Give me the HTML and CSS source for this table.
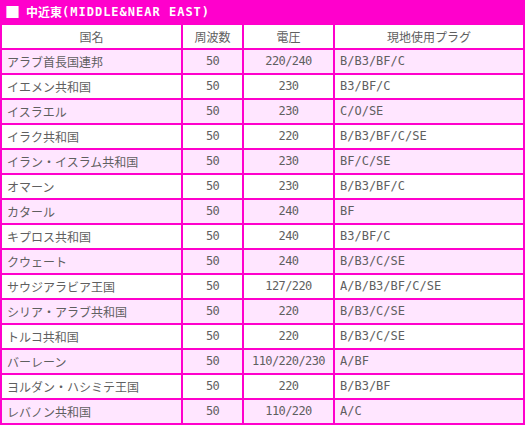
FILE: index.html
```html
<!DOCTYPE html>
<html lang="ja">
<head>
<meta charset="utf-8">
<title>中近東</title>
<link rel="stylesheet" href="styles.css">
</head>
<body>
<div class="page">
  <div class="title"><span class="mark">■</span><span class="title-jp">中近東</span><span class="title-en">(MIDDLE&amp;NEAR EAST)</span></div>
  <table class="plugs">
    <colgroup>
      <col class="c-name"><col class="c-hz"><col class="c-volt"><col class="c-plug">
    </colgroup>
    <tr class="head"><td>国名</td><td>周波数</td><td>電圧</td><td>現地使用プラグ</td></tr>
    <tr class="pink"><td class="l">アラブ首長国連邦</td><td class="n">50</td><td class="n">220/240</td><td class="l p">B/B3/BF/C</td></tr>
    <tr><td class="l">イエメン共和国</td><td class="n">50</td><td class="n">230</td><td class="l p">B3/BF/C</td></tr>
    <tr class="pink"><td class="l">イスラエル</td><td class="n">50</td><td class="n">230</td><td class="l p">C/O/SE</td></tr>
    <tr><td class="l">イラク共和国</td><td class="n">50</td><td class="n">220</td><td class="l p">B/B3/BF/C/SE</td></tr>
    <tr class="pink"><td class="l">イラン・イスラム共和国</td><td class="n">50</td><td class="n">230</td><td class="l p">BF/C/SE</td></tr>
    <tr><td class="l">オマーン</td><td class="n">50</td><td class="n">230</td><td class="l p">B/B3/BF/C</td></tr>
    <tr class="pink"><td class="l">カタール</td><td class="n">50</td><td class="n">240</td><td class="l p">BF</td></tr>
    <tr><td class="l">キプロス共和国</td><td class="n">50</td><td class="n">240</td><td class="l p">B3/BF/C</td></tr>
    <tr class="pink"><td class="l">クウェート</td><td class="n">50</td><td class="n">240</td><td class="l p">B/B3/C/SE</td></tr>
    <tr><td class="l">サウジアラビア王国</td><td class="n">50</td><td class="n">127/220</td><td class="l p">A/B/B3/BF/C/SE</td></tr>
    <tr class="pink"><td class="l">シリア・アラブ共和国</td><td class="n">50</td><td class="n">220</td><td class="l p">B/B3/C/SE</td></tr>
    <tr><td class="l">トルコ共和国</td><td class="n">50</td><td class="n">220</td><td class="l p">B/B3/C/SE</td></tr>
    <tr class="pink"><td class="l">バーレーン</td><td class="n">50</td><td class="n">110/220/230</td><td class="l p">A/BF</td></tr>
    <tr><td class="l">ヨルダン・ハシミテ王国</td><td class="n">50</td><td class="n">220</td><td class="l p">B/B3/BF</td></tr>
    <tr class="pink"><td class="l">レバノン共和国</td><td class="n">50</td><td class="n">110/220</td><td class="l p">A/C</td></tr>
  </table>
</div>
</body>
</html>
```
FILE: styles.css
```css
html, body {
  margin: 0;
  padding: 0;
  background: #ffffff;
}
.page {
  width: 525px;
  font-family: "Noto Sans CJK JP", sans-serif;
  font-size: 12px;
  color: #5f5f5f;
}
.title {
  height: 23px;
  background: #ff00cc;
  color: #ffffff;
  font-weight: bold;
  font-size: 12px;
  display: flex;
  align-items: center;
  padding-left: 5px;
}
.mark {
  width: 21px;
  font-size: 15px;
  line-height: 1;
}
.title-en {
  font-family: "DejaVu Sans Mono", "Noto Sans CJK JP", monospace;
  letter-spacing: 1px;
}
.plugs {
  width: 525px;
  border-collapse: separate;
  border-spacing: 2px;
  background: #ff00cc;
  table-layout: fixed;
}
.plugs td {
  height: 23px;
  padding: 0;
  line-height: 23px;
  text-align: center;
  background: #ffffff;
  white-space: nowrap;
  overflow: hidden;
}
.plugs .head td {
  background: #ffffff;
}
.plugs tr.pink td {
  background: #ffe6ff;
}
.plugs td.l {
  text-align: left;
  padding-left: 5px;
}
.plugs td.n {
  font-family: "DejaVu Sans Mono", monospace;
  font-size: 12px;
  letter-spacing: -0.6px;
}
.plugs td.p {
  font-family: "DejaVu Sans Mono", monospace;
  font-size: 12px;
}
.c-name { width: 179px; }
.c-hz { width: 59px; }
.c-volt { width: 89px; }
.c-plug { width: 188px; }
```
